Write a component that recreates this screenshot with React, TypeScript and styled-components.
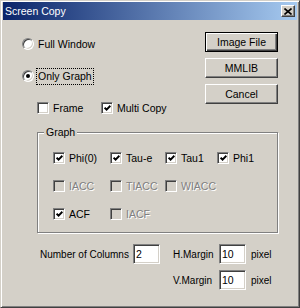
import styled, { createGlobalStyle } from 'styled-components'

const face = '#d4d0c8'
const shade = '#808080'
const dark = '#404040'

const GlobalStyle = createGlobalStyle`
  html, body {
    margin: 0;
    padding: 0;
    background: ${face};
  }
  body {
    font-family: "Liberation Sans", Arial, sans-serif;
    font-size: 10px;
    color: #000;
  }
`

const Window = styled.div`
  width: 300px;
  height: 308px;
  box-sizing: border-box;
  background: ${face};
  border: 1px solid;
  border-color: ${face} ${dark} ${dark} ${face};
  box-shadow: inset 1px 1px #fff, inset -1px -1px ${shade};
  padding: 1px 2px 2px 2px;
  display: flex;
  flex-direction: column;
`

const TitleBar = styled.div`
  height: 18px;
  flex-shrink: 0;
  display: flex;
  align-items: center;
  justify-content: space-between;
  padding: 0 2px 0 2px;
  background: linear-gradient(to right, #0a246a, #a6caf0);
  color: #fff;
  font-size: 10.5px;
`

const CloseButton = styled.div`
  width: 14px;
  height: 12px;
  box-sizing: border-box;
  background: ${face};
  border: 1px solid;
  border-color: #fff ${dark} ${dark} #fff;
  box-shadow: inset -1px -1px ${shade};
  display: flex;
  align-items: center;
  justify-content: center;
`

const Body = styled.div`
  flex: 1;
  padding: 0 19px 0 19px;
  display: flex;
  flex-direction: column;
`

const TopRow = styled.div`
  display: flex;
  justify-content: space-between;
`

const LeftCol = styled.div`
  display: flex;
  flex-direction: column;
  gap: 12px;
  padding-top: 14px;
`

const ButtonCol = styled.div`
  display: flex;
  flex-direction: column;
  gap: 6px;
  padding-top: 12px;
`

const Button = styled.div<{ $default?: boolean }>`
  width: 73px;
  height: 20px;
  box-sizing: border-box;
  display: flex;
  align-items: center;
  justify-content: center;
  background: ${face};
  border: 1px solid;
  border-color: ${p => (p.$default ? '#000' : `#fff ${dark} ${dark} #fff`)};
  box-shadow: ${p =>
    p.$default
      ? `inset 1px 1px #fff, inset -1px -1px ${dark}, inset -2px -2px ${shade}`
      : `inset -1px -1px ${shade}`};
  font-size: 10.5px;
`

const OptionRow = styled.div`
  height: 20px;
  display: flex;
  align-items: center;
  gap: 2px;
`

const Radio = styled.span<{ $checked?: boolean }>`
  width: 12px;
  height: 12px;
  box-sizing: border-box;
  border-radius: 50%;
  background: #fff;
  border: 1px solid;
  border-color: ${shade} #fff #fff ${shade};
  box-shadow: inset 1px 1px ${dark}, inset -1px -1px ${face};
  display: flex;
  align-items: center;
  justify-content: center;

  &::after {
    content: '';
    width: 4px;
    height: 4px;
    border-radius: 50%;
    background: ${p => (p.$checked ? '#000' : 'transparent')};
  }
`

const Label = styled.span<{ $focused?: boolean }>`
  padding: 1px 1px;
  line-height: 13px;
  border: 1px dotted ${p => (p.$focused ? '#000' : 'transparent')};
  font-size: 10.5px;
`

const CheckRow = styled.div`
  height: 20px;
  margin-left: 15px;
  display: grid;
  grid-template-columns: 64px auto;
  align-items: center;
`

const CheckItem = styled.div<{ $disabled?: boolean }>`
  display: flex;
  align-items: center;
  gap: 4px;
  height: 14px;
  font-size: 10.5px;
  color: ${p => (p.$disabled ? shade : '#000')};
  text-shadow: ${p => (p.$disabled ? '1px 1px #fff' : 'none')};
  white-space: nowrap;
`

const Box = styled.span<{ $disabled?: boolean }>`
  width: 12px;
  height: 12px;
  flex-shrink: 0;
  box-sizing: border-box;
  background: ${p => (p.$disabled ? face : '#fff')};
  border: 1px solid;
  border-color: ${shade} #fff #fff ${shade};
  box-shadow: inset 1px 1px ${dark}, inset -1px -1px ${face};
  display: flex;
  align-items: center;
  justify-content: center;
`

const GroupBox = styled.div`
  position: relative;
  margin: 14px 0 0 15px;
  width: 241px;
  height: 101px;
  box-sizing: border-box;
  border: 1px solid ${shade};
  box-shadow: inset 1px 1px #fff, 1px 1px #fff;
  padding: 18px 0 0 15px;
`

const GroupLegend = styled.span`
  position: absolute;
  top: -7px;
  left: 6px;
  padding: 0 2px;
  background: ${face};
  line-height: 13px;
  font-size: 10.5px;
`

const GroupGrid = styled.div`
  display: grid;
  grid-template-columns: 57px 55px 52px auto;
  grid-auto-rows: 14px;
  row-gap: 14px;
`

const BottomGrid = styled.div`
  margin: 11px 0 0 18px;
  display: grid;
  grid-template-columns: 93px 40px 46px 32px auto;
  grid-auto-rows: 20px;
  row-gap: 6px;
  align-items: center;
  font-size: 10px;
  white-space: nowrap;
`

const Field = styled.input`
  width: 27px;
  height: 20px;
  box-sizing: border-box;
  margin: 0;
  padding: 0 0 0 2px;
  font: inherit;
  font-size: 10.5px;
  color: #000;
  background: #fff;
  border: 1px solid;
  border-color: ${shade} #fff #fff ${shade};
  box-shadow: inset 1px 1px ${dark}, inset -1px -1px ${face};
  outline: none;
`

const CheckMark = () => (
  <svg width="7" height="7" viewBox="0 0 7 7">
    <path d="M0.6 2.6 L2.6 4.6 L6.4 0.8" fill="none" stroke="#000" strokeWidth="2" />
  </svg>
)

const Check = ({ label, checked, disabled }: { label: string; checked?: boolean; disabled?: boolean }) => (
  <CheckItem $disabled={disabled}>
    <Box $disabled={disabled}>{checked && <CheckMark />}</Box>
    {label}
  </CheckItem>
)

export default function App() {
  return (
    <>
      <GlobalStyle />
      <Window>
        <TitleBar>
          <span>Screen Copy</span>
          <CloseButton>
            <svg width="8" height="7" viewBox="0 0 8 7">
              <path d="M0.5 0.5 L7.5 6.5 M7.5 0.5 L0.5 6.5" stroke="#000" strokeWidth="1.6" />
            </svg>
          </CloseButton>
        </TitleBar>
        <Body>
          <TopRow>
            <LeftCol>
              <OptionRow>
                <Radio />
                <Label>Full Window</Label>
              </OptionRow>
              <OptionRow>
                <Radio $checked />
                <Label $focused>Only Graph</Label>
              </OptionRow>
              <CheckRow>
                <Check label="Frame" />
                <Check label="Multi Copy" checked />
              </CheckRow>
            </LeftCol>
            <ButtonCol>
              <Button $default>Image File</Button>
              <Button>MMLIB</Button>
              <Button>Cancel</Button>
            </ButtonCol>
          </TopRow>

          <GroupBox>
            <GroupLegend>Graph</GroupLegend>
            <GroupGrid>
              <Check label="Phi(0)" checked />
              <Check label="Tau-e" checked />
              <Check label="Tau1" checked />
              <Check label="Phi1" checked />
              <Check label="IACC" disabled />
              <Check label="TIACC" disabled />
              <Check label="WIACC" disabled />
              <span />
              <Check label="ACF" checked />
              <Check label="IACF" disabled />
            </GroupGrid>
          </GroupBox>

          <BottomGrid>
            <span>Number of Columns</span>
            <Field defaultValue="2" readOnly />
            <span>H.Margin</span>
            <Field defaultValue="10" readOnly />
            <span>pixel</span>
            <span />
            <span />
            <span>V.Margin</span>
            <Field defaultValue="10" readOnly />
            <span>pixel</span>
          </BottomGrid>
        </Body>
      </Window>
    </>
  )
}
